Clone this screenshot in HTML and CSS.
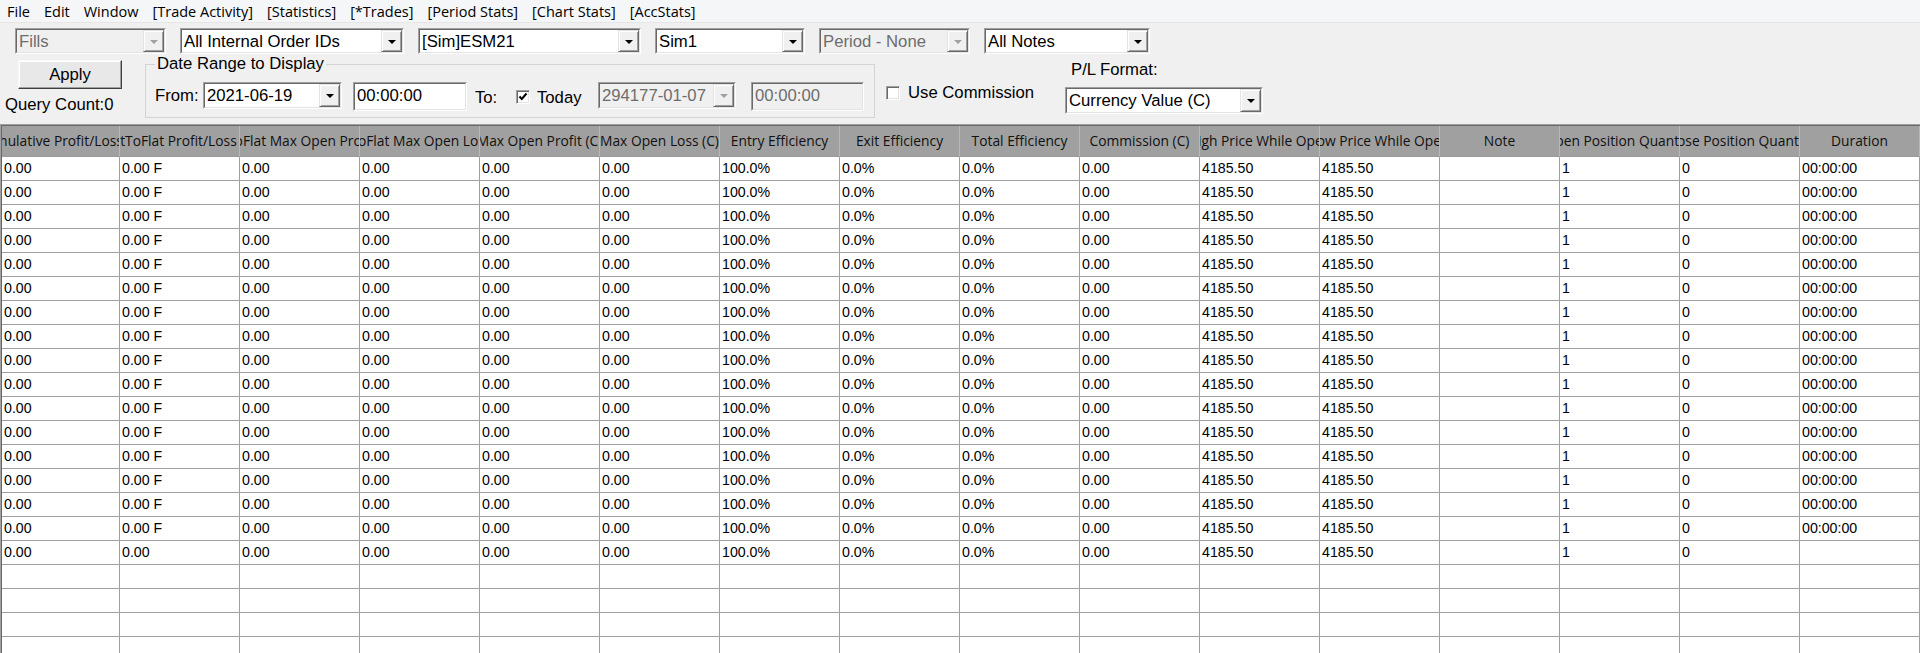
FILE: index.html
```html
<!DOCTYPE html>
<html>
<head>
<meta charset="utf-8">
<link rel="stylesheet" href="styles.css">
</head>
<body>
<div class="menubar">
  <span class="menu-item">File</span>
  <span class="menu-item">Edit</span>
  <span class="menu-item">Window</span>
  <span class="menu-item">[Trade Activity]</span>
  <span class="menu-item">[Statistics]</span>
  <span class="menu-item">[*Trades]</span>
  <span class="menu-item">[Period Stats]</span>
  <span class="menu-item">[Chart Stats]</span>
  <span class="menu-item">[AccStats]</span>
</div>
<div class="toolbar">
  <div class="row1">
    <div class="combo disabled w-fills"><div class="field"><span class="ctext">Fills</span><span class="cbtn"><i class="arrow"></i></span></div></div>
    <div class="combo w-orders"><div class="field"><span class="ctext">All Internal Order IDs</span><span class="cbtn"><i class="arrow"></i></span></div></div>
    <div class="combo w-symbol"><div class="field"><span class="ctext">[Sim]ESM21</span><span class="cbtn"><i class="arrow"></i></span></div></div>
    <div class="combo w-account"><div class="field"><span class="ctext">Sim1</span><span class="cbtn"><i class="arrow"></i></span></div></div>
    <div class="combo disabled w-period"><div class="field"><span class="ctext">Period - None</span><span class="cbtn"><i class="arrow"></i></span></div></div>
    <div class="combo w-notes"><div class="field"><span class="ctext">All Notes</span><span class="cbtn"><i class="arrow"></i></span></div></div>
  </div>
  <div class="row2">
    <div class="leftcol">
      <div class="btn">Apply</div>
      <div class="query">Query Count:0</div>
    </div>
    <fieldset class="daterange">
      <legend>Date Range to Display</legend>
      <div class="dr-row">
        <span class="lbl lbl-from">From:</span>
        <div class="combo tall w-date"><div class="field"><span class="ctext">2021-06-19</span><span class="cbtn"><i class="arrow"></i></span></div></div>
        <div class="edit w-time"><div class="field"><span class="ctext">00:00:00</span></div></div>
        <span class="lbl lbl-to">To:</span>
        <span class="check"><svg width="12" height="12" viewBox="0 0 12 12"><polyline points="2.5,5.5 4.8,8 9.5,2.5" fill="none" stroke="#000" stroke-width="2"/></svg></span>
        <span class="lbl lbl-today">Today</span>
        <div class="combo tall disabled w-date2"><div class="field"><span class="ctext">294177-01-07</span><span class="cbtn"><i class="arrow"></i></span></div></div>
        <div class="edit disabled w-time2"><div class="field"><span class="ctext">00:00:00</span></div></div>
      </div>
    </fieldset>
    <div class="commission">
      <span class="check"></span>
      <span class="lbl">Use Commission</span>
    </div>
    <div class="plformat">
      <div class="lbl pl-lbl">P/L Format:</div>
      <div class="combo tall w-currency"><div class="field"><span class="ctext">Currency Value (C)</span><span class="cbtn"><i class="arrow"></i></span></div></div>
    </div>
  </div>
</div>
<div class="grid-outer">
<div class="grid">
  <div class="row hdr">
    <span><b>Cumulative Profit/Loss (C)</b></span>
    <span><b>FlatToFlat Profit/Loss (C)</b></span>
    <span><b>FlatToFlat Max Open Profit (C)</b></span>
    <span><b>FlatToFlat Max Open Loss (C)</b></span>
    <span><b>Max Open Profit (C)</b></span>
    <span><b>Max Open Loss (C)</b></span>
    <span><b>Entry Efficiency</b></span>
    <span><b>Exit Efficiency</b></span>
    <span><b>Total Efficiency</b></span>
    <span><b>Commission (C)</b></span>
    <span><b>High Price While Open</b></span>
    <span><b>Low Price While Open</b></span>
    <span><b>Note</b></span>
    <span><b>Open Position Quantity</b></span>
    <span><b>Close Position Quantity</b></span>
    <span><b>Duration</b></span>
  </div>
  <div class="row"><span>0.00</span><span>0.00 F</span><span>0.00</span><span>0.00</span><span>0.00</span><span>0.00</span><span>100.0%</span><span>0.0%</span><span>0.0%</span><span>0.00</span><span>4185.50</span><span>4185.50</span><span></span><span>1</span><span>0</span><span>00:00:00</span></div>
  <div class="row"><span>0.00</span><span>0.00 F</span><span>0.00</span><span>0.00</span><span>0.00</span><span>0.00</span><span>100.0%</span><span>0.0%</span><span>0.0%</span><span>0.00</span><span>4185.50</span><span>4185.50</span><span></span><span>1</span><span>0</span><span>00:00:00</span></div>
  <div class="row"><span>0.00</span><span>0.00 F</span><span>0.00</span><span>0.00</span><span>0.00</span><span>0.00</span><span>100.0%</span><span>0.0%</span><span>0.0%</span><span>0.00</span><span>4185.50</span><span>4185.50</span><span></span><span>1</span><span>0</span><span>00:00:00</span></div>
  <div class="row"><span>0.00</span><span>0.00 F</span><span>0.00</span><span>0.00</span><span>0.00</span><span>0.00</span><span>100.0%</span><span>0.0%</span><span>0.0%</span><span>0.00</span><span>4185.50</span><span>4185.50</span><span></span><span>1</span><span>0</span><span>00:00:00</span></div>
  <div class="row"><span>0.00</span><span>0.00 F</span><span>0.00</span><span>0.00</span><span>0.00</span><span>0.00</span><span>100.0%</span><span>0.0%</span><span>0.0%</span><span>0.00</span><span>4185.50</span><span>4185.50</span><span></span><span>1</span><span>0</span><span>00:00:00</span></div>
  <div class="row"><span>0.00</span><span>0.00 F</span><span>0.00</span><span>0.00</span><span>0.00</span><span>0.00</span><span>100.0%</span><span>0.0%</span><span>0.0%</span><span>0.00</span><span>4185.50</span><span>4185.50</span><span></span><span>1</span><span>0</span><span>00:00:00</span></div>
  <div class="row"><span>0.00</span><span>0.00 F</span><span>0.00</span><span>0.00</span><span>0.00</span><span>0.00</span><span>100.0%</span><span>0.0%</span><span>0.0%</span><span>0.00</span><span>4185.50</span><span>4185.50</span><span></span><span>1</span><span>0</span><span>00:00:00</span></div>
  <div class="row"><span>0.00</span><span>0.00 F</span><span>0.00</span><span>0.00</span><span>0.00</span><span>0.00</span><span>100.0%</span><span>0.0%</span><span>0.0%</span><span>0.00</span><span>4185.50</span><span>4185.50</span><span></span><span>1</span><span>0</span><span>00:00:00</span></div>
  <div class="row"><span>0.00</span><span>0.00 F</span><span>0.00</span><span>0.00</span><span>0.00</span><span>0.00</span><span>100.0%</span><span>0.0%</span><span>0.0%</span><span>0.00</span><span>4185.50</span><span>4185.50</span><span></span><span>1</span><span>0</span><span>00:00:00</span></div>
  <div class="row"><span>0.00</span><span>0.00 F</span><span>0.00</span><span>0.00</span><span>0.00</span><span>0.00</span><span>100.0%</span><span>0.0%</span><span>0.0%</span><span>0.00</span><span>4185.50</span><span>4185.50</span><span></span><span>1</span><span>0</span><span>00:00:00</span></div>
  <div class="row"><span>0.00</span><span>0.00 F</span><span>0.00</span><span>0.00</span><span>0.00</span><span>0.00</span><span>100.0%</span><span>0.0%</span><span>0.0%</span><span>0.00</span><span>4185.50</span><span>4185.50</span><span></span><span>1</span><span>0</span><span>00:00:00</span></div>
  <div class="row"><span>0.00</span><span>0.00 F</span><span>0.00</span><span>0.00</span><span>0.00</span><span>0.00</span><span>100.0%</span><span>0.0%</span><span>0.0%</span><span>0.00</span><span>4185.50</span><span>4185.50</span><span></span><span>1</span><span>0</span><span>00:00:00</span></div>
  <div class="row"><span>0.00</span><span>0.00 F</span><span>0.00</span><span>0.00</span><span>0.00</span><span>0.00</span><span>100.0%</span><span>0.0%</span><span>0.0%</span><span>0.00</span><span>4185.50</span><span>4185.50</span><span></span><span>1</span><span>0</span><span>00:00:00</span></div>
  <div class="row"><span>0.00</span><span>0.00 F</span><span>0.00</span><span>0.00</span><span>0.00</span><span>0.00</span><span>100.0%</span><span>0.0%</span><span>0.0%</span><span>0.00</span><span>4185.50</span><span>4185.50</span><span></span><span>1</span><span>0</span><span>00:00:00</span></div>
  <div class="row"><span>0.00</span><span>0.00 F</span><span>0.00</span><span>0.00</span><span>0.00</span><span>0.00</span><span>100.0%</span><span>0.0%</span><span>0.0%</span><span>0.00</span><span>4185.50</span><span>4185.50</span><span></span><span>1</span><span>0</span><span>00:00:00</span></div>
  <div class="row"><span>0.00</span><span>0.00 F</span><span>0.00</span><span>0.00</span><span>0.00</span><span>0.00</span><span>100.0%</span><span>0.0%</span><span>0.0%</span><span>0.00</span><span>4185.50</span><span>4185.50</span><span></span><span>1</span><span>0</span><span>00:00:00</span></div>
  <div class="row"><span>0.00</span><span>0.00</span><span>0.00</span><span>0.00</span><span>0.00</span><span>0.00</span><span>100.0%</span><span>0.0%</span><span>0.0%</span><span>0.00</span><span>4185.50</span><span>4185.50</span><span></span><span>1</span><span>0</span><span></span></div>
  <div class="row"><span></span><span></span><span></span><span></span><span></span><span></span><span></span><span></span><span></span><span></span><span></span><span></span><span></span><span></span><span></span><span></span></div>
  <div class="row"><span></span><span></span><span></span><span></span><span></span><span></span><span></span><span></span><span></span><span></span><span></span><span></span><span></span><span></span><span></span><span></span></div>
  <div class="row"><span></span><span></span><span></span><span></span><span></span><span></span><span></span><span></span><span></span><span></span><span></span><span></span><span></span><span></span><span></span><span></span></div>
  <div class="row"><span></span><span></span><span></span><span></span><span></span><span></span><span></span><span></span><span></span><span></span><span></span><span></span><span></span><span></span><span></span><span></span></div>
</div>
</div>
</body>
</html>
```
FILE: styles.css
```css
html, body {
  margin: 0;
  padding: 0;
}
body {
  width: 1920px;
  height: 653px;
  overflow: hidden;
  background: #f0f0f0;
  color: #000;
  font-family: "Liberation Sans", Arial, sans-serif;
  font-size: 16.7px;
}

/* menu bar */
.menubar {
  height: 22px;
  background: #f5f6f7;
  border-bottom: 1px solid #e6e6e6;
  display: flex;
  align-items: center;
  font-family: "Open Sans", "Noto Sans", sans-serif;
  font-size: 14.5px;
  line-height: 19px;
}
.menu-item {
  padding: 0 7px;
  white-space: nowrap;
}

/* toolbar */
.toolbar {
  height: 101px;
  box-sizing: border-box;
  padding-top: 5px;
  overflow: hidden;
}
.row1 {
  display: flex;
  gap: 14px;
  padding-left: 15px;
}
.row2 {
  display: flex;
  align-items: flex-start;
}

/* combo / edit */
.combo, .edit {
  box-sizing: border-box;
  height: 26px;
  border: 1px solid;
  border-color: #a0a0a0 #ffffff #ffffff #a0a0a0;
  background: #fff;
  flex: none;
}
.combo.tall { height: 27px; }
.edit { height: 29px; }
.field {
  box-sizing: border-box;
  height: 100%;
  border: 1px solid;
  border-color: #696969 #e3e3e3 #e3e3e3 #696969;
  display: flex;
  align-items: stretch;
}
.ctext {
  flex: 1;
  padding: 1px 0 0 2px;
  line-height: 21px;
  white-space: nowrap;
  overflow: hidden;
}
.cbtn {
  width: 21px;
  box-sizing: border-box;
  background: #f0f0f0;
  border: 1px solid;
  border-color: #e3e3e3 #696969 #696969 #e3e3e3;
  box-shadow: inset 1px 1px 0 #fff, inset -1px -1px 0 #a0a0a0;
  display: flex;
  align-items: center;
  justify-content: center;
}
.arrow {
  width: 0;
  height: 0;
  border-left: 4px solid transparent;
  border-right: 4px solid transparent;
  border-top: 4px solid #000;
  margin-top: 1px;
}
.disabled { background: #f0f0f0; }
.disabled .ctext { color: #6d6d6d; }
.disabled .arrow { border-top-color: #a0a0a0; }

.w-fills { width: 151px; }
.w-orders { width: 224px; }
.w-symbol { width: 223px; }
.w-account { width: 150px; }
.w-period { width: 151px; }
.w-notes { width: 166px; }
.w-date { width: 139px; }
.w-time { width: 114px; margin-left: 11px; }
.w-date2 { width: 138px; }
.w-time2 { width: 113px; margin-left: 15px; }
.w-currency { width: 198px; }

/* left column */
.leftcol {
  width: 145px;
  flex: none;
}
.btn {
  box-sizing: border-box;
  width: 104px;
  height: 29px;
  margin: 6px 0 0 18px;
  background: #e8e8e8;
  border: 1px solid;
  border-color: #f8f8f8 #404040 #404040 #f8f8f8;
  box-shadow: inset -1px -1px 0 #a0a0a0, inset 1px 1px 0 #fff;
  text-align: center;
  line-height: 27px;
}
.query {
  margin-top: 7px;
  padding-left: 5px;
  line-height: 18px;
  white-space: nowrap;
}

/* date range group */
.daterange {
  box-sizing: border-box;
  width: 730px;
  margin: 1px 0 0 0;
  padding: 0 9px 6px 9px;
  border: 1px solid #d3d3d3;
  min-width: 0;
  flex: none;
}
.daterange legend {
  padding: 0 2px;
  line-height: 18px;
}
.dr-row {
  display: flex;
  align-items: flex-start;
  margin-top: 9px;
}
.lbl {
  line-height: 18px;
  white-space: nowrap;
}
.lbl-from { width: 48px; margin-top: 5px; }
.lbl-to { width: 41px; margin: 7px 0 0 8px; }
.lbl-today { width: 61px; margin: 7px 0 0 7px; }
.check {
  box-sizing: border-box;
  width: 14px;
  height: 14px;
  background: #fff;
  border: 1px solid;
  border-color: #a0a0a0 #ffffff #ffffff #a0a0a0;
  box-shadow: inset 1px 1px 0 #696969, inset -1px -1px 0 #e3e3e3;
  display: flex;
  align-items: center;
  justify-content: center;
  flex: none;
}
.dr-row .check { margin-top: 8px; }

.commission {
  width: 190px;
  box-sizing: border-box;
  padding-left: 11px;
  margin-top: 30px;
  display: flex;
  align-items: center;
  flex: none;
}
.commission .lbl { margin-left: 8px; }

.plformat {
  flex: none;
}
.pl-lbl {
  margin: 7px 0 8px 0;
  padding-left: 6px;
}

/* grid */
.grid-outer {
  border-top: 1px solid #a0a0a0;
  border-left: 1px solid #a0a0a0;
}
.grid {
  border-top: 1px solid #696969;
  border-left: 1px solid #696969;
  background: #fff;
}
.row {
  display: grid;
  grid-template-columns: 118px repeat(15, 120px);
  height: 24px;
  font-family: "Liberation Sans", Arial, sans-serif;
  font-size: 14.2px;
}
.row > span {
  box-sizing: border-box;
  border-right: 1px solid #a0a0a0;
  border-bottom: 1px solid #a0a0a0;
  padding-left: 2px;
  line-height: 23px;
  white-space: nowrap;
  overflow: hidden;
}
.row.hdr {
  height: 31px;
  background: #a0a0a0;
  font-family: "Open Sans", "Noto Sans", sans-serif;
  font-size: 13.8px;
}
.row.hdr > span {
  display: flex;
  justify-content: center;
  align-items: center;
  padding: 0;
  border-right-color: #b8b8b8;
  border-bottom-color: #9a9a9a;
  line-height: 30px;
  color: #111;
}
.row.hdr b {
  font-weight: normal;
  flex: none;
  white-space: nowrap;
}
```
